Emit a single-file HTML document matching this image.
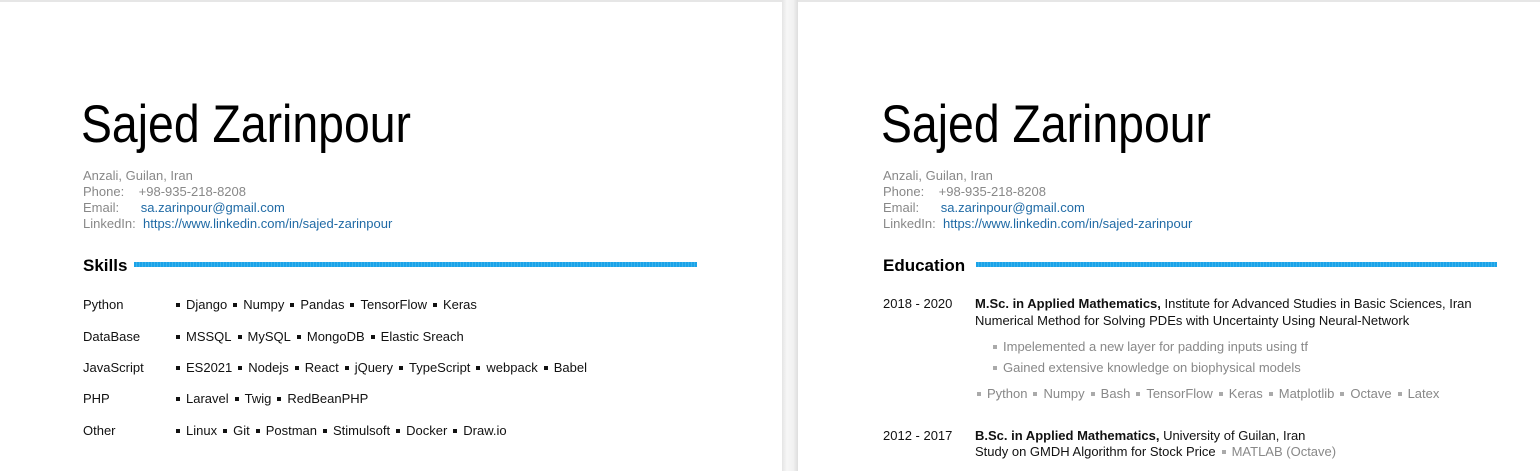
<!DOCTYPE html>
<html><head><meta charset="utf-8"><style>
body{margin:0;width:1540px;height:471px;overflow:hidden;background:#fff;font-family:"Liberation Sans",sans-serif;position:relative}
.t{position:absolute;white-space:nowrap;font-size:13px;line-height:16px;color:#111}
.g{color:#888}
.l{color:#1f6aa5}
.name{position:absolute;white-space:nowrap;font-size:53px;line-height:60px;color:#000;transform:scaleX(0.875);transform-origin:0 0}
.h{position:absolute;white-space:nowrap;font-size:17px;line-height:20px;font-weight:bold;color:#000}
.bar{position:absolute;height:5px;background:repeating-linear-gradient(90deg,#1ba3e8 0 2px,#3bb2ec 2px 3px)}
.b{display:inline-block;width:4px;height:4px;background:#111;vertical-align:middle;margin:0 6px 2px 6px}
.bg{display:inline-block;width:4px;height:4px;background:#aaa;vertical-align:middle;margin:0 6px 2px 6px}
.first{margin-left:0}
b{font-weight:bold}
</style></head><body>
<div style="position:absolute;left:0;top:0;width:1540px;height:2px;background:#e6e6e6"></div>
<div style="position:absolute;left:782px;top:0;width:16px;height:471px;background:linear-gradient(90deg,#e4e4e4,#f6f6f6 30%,#f2f2f2 70%,#dedede)"></div>
<div style="position:absolute;left:0;top:2px;width:782px;height:469px;background:#fff"></div>
<div style="position:absolute;left:798px;top:2px;width:742px;height:469px;background:#fff"></div>

<!-- left page -->
<div class="name" style="left:81px;top:95px">Sajed Zarinpour</div>
<div class="t g" style="left:83px;top:168px">Anzali, Guilan, Iran</div>
<div class="t g" style="left:83px;top:184px">Phone:&nbsp;&nbsp;&nbsp; +98-935-218-8208</div>
<div class="t g" style="left:83px;top:200px">Email:&nbsp;&nbsp;&nbsp;&nbsp;&nbsp; <span class="l">sa.zarinpour@gmail.com</span></div>
<div class="t g" style="left:83px;top:216px">LinkedIn:&nbsp; <span class="l">https://www.linkedin.com/in/sajed-zarinpour</span></div>
<div class="h" style="left:83px;top:256px">Skills</div>
<div class="bar" style="left:134px;top:262px;width:563px"></div>

<div class="t" style="left:83px;top:297px">Python</div>
<div class="t" style="left:176px;top:297px"><span class="b first"></span>Django<span class="b"></span>Numpy<span class="b"></span>Pandas<span class="b"></span>TensorFlow<span class="b"></span>Keras</div>
<div class="t" style="left:83px;top:329px">DataBase</div>
<div class="t" style="left:176px;top:329px"><span class="b first"></span>MSSQL<span class="b"></span>MySQL<span class="b"></span>MongoDB<span class="b"></span>Elastic Sreach</div>
<div class="t" style="left:83px;top:360px">JavaScript</div>
<div class="t" style="left:176px;top:360px"><span class="b first"></span>ES2021<span class="b"></span>Nodejs<span class="b"></span>React<span class="b"></span>jQuery<span class="b"></span>TypeScript<span class="b"></span>webpack<span class="b"></span>Babel</div>
<div class="t" style="left:83px;top:391px">PHP</div>
<div class="t" style="left:176px;top:391px"><span class="b first"></span>Laravel<span class="b"></span>Twig<span class="b"></span>RedBeanPHP</div>
<div class="t" style="left:83px;top:423px">Other</div>
<div class="t" style="left:176px;top:423px"><span class="b first"></span>Linux<span class="b"></span>Git<span class="b"></span>Postman<span class="b"></span>Stimulsoft<span class="b"></span>Docker<span class="b"></span>Draw.io</div>

<!-- right page -->
<div class="name" style="left:881px;top:95px">Sajed Zarinpour</div>
<div class="t g" style="left:883px;top:168px">Anzali, Guilan, Iran</div>
<div class="t g" style="left:883px;top:184px">Phone:&nbsp;&nbsp;&nbsp; +98-935-218-8208</div>
<div class="t g" style="left:883px;top:200px">Email:&nbsp;&nbsp;&nbsp;&nbsp;&nbsp; <span class="l">sa.zarinpour@gmail.com</span></div>
<div class="t g" style="left:883px;top:216px">LinkedIn:&nbsp; <span class="l">https://www.linkedin.com/in/sajed-zarinpour</span></div>
<div class="h" style="left:883px;top:256px">Education</div>
<div class="bar" style="left:976px;top:262px;width:521px"></div>

<div class="t" style="left:883px;top:296px">2018 - 2020</div>
<div class="t" style="left:975px;top:296px"><b>M.Sc. in Applied Mathematics,</b> Institute for Advanced Studies in Basic Sciences, Iran</div>
<div class="t" style="left:975px;top:313px">Numerical Method for Solving PDEs with Uncertainty Using Neural-Network</div>
<div class="t g" style="left:993px;top:339px"><span class="bg first"></span>Impelemented a new layer for padding inputs using tf</div>
<div class="t g" style="left:993px;top:360px"><span class="bg first"></span>Gained extensive knowledge on biophysical models</div>
<div class="t g" style="left:977px;top:386px"><span class="bg first"></span>Python<span class="bg"></span>Numpy<span class="bg"></span>Bash<span class="bg"></span>TensorFlow<span class="bg"></span>Keras<span class="bg"></span>Matplotlib<span class="bg"></span>Octave<span class="bg"></span>Latex</div>
<div class="t" style="left:883px;top:428px">2012 - 2017</div>
<div class="t" style="left:975px;top:428px"><b>B.Sc. in Applied Mathematics,</b> University of Guilan, Iran</div>
<div class="t" style="left:975px;top:444px">Study on GMDH Algorithm for Stock Price<span class="bg"></span><span class="g">MATLAB (Octave)</span></div>
</body></html>
